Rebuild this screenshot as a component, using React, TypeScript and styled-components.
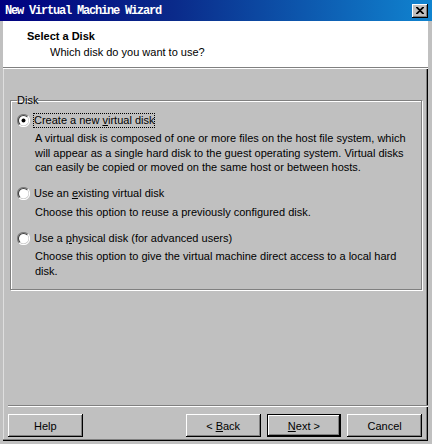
import React from "react";
import styled, { createGlobalStyle } from "styled-components";

const Global = createGlobalStyle`
  html, body { margin: 0; padding: 0; background: #c0c0c0; }
  body { font-family: Tahoma, "Liberation Sans", Arial, sans-serif; font-size: 11px; color: #000; }
`;

const Window = styled.div`
  width: 432px;
  height: 444px;
  box-sizing: border-box;
  background: #c0c0c0;
  border-left: 3px solid #c0c0c0;
  border-right: 4px solid #c0c0c0;
  border-bottom: 3px solid #c0c0c0;
  box-shadow: inset -1px -1px 0 #000, inset -2px -2px 0 #808080, inset 1px 0 0 #dfdfdf;
  display: flex;
  flex-direction: column;
  position: relative;
`;

const TitleBar = styled.div`
  height: 21px;
  margin-left: -3px;
  margin-right: -4px;
  padding: 0 3px 0 5px;
  background: linear-gradient(to right, #000080 0%, #0a2a8a 40%, #1084d0 100%);
  display: flex;
  align-items: center;
  justify-content: space-between;
`;

const TitleText = styled.span`
  font-family: "Liberation Mono", "DejaVu Sans Mono", monospace;
  font-weight: bold;
  font-size: 12px;
  letter-spacing: -1.2px;
  color: #fff;
`;

const CloseButton = styled.div`
  width: 16px;
  height: 14px;
  box-sizing: border-box;
  background: #c0c0c0;
  box-shadow: inset -1px -1px 0 #000, inset 1px 1px 0 #fff, inset -2px -2px 0 #808080;
  display: flex;
  align-items: center;
  justify-content: center;
  margin-right: 1px;
`;

const Header = styled.div`
  height: 47px;
  background: #fff;
  padding: 8px 0 0 24px;
  box-sizing: border-box;
  border-bottom: 1px solid #808080;
  box-shadow: 0 1px 0 #fff;
`;

const HeaderTitle = styled.div`
  font-weight: bold;
  font-size: 11px;
  line-height: 14px;
`;

const HeaderSub = styled.div`
  padding-left: 23px;
  line-height: 14px;
  margin-top: 2px;
`;

const Body = styled.div`
  flex: 1;
  display: flex;
  flex-direction: column;
  padding: 26px 6px 0 7px;
`;

const GroupBox = styled.fieldset`
  margin: 0;
  padding: 6px 0 0 6px;
  height: 196px;
  box-sizing: border-box;
  border: 1px solid #808080;
  box-shadow: inset 1px 1px 0 #fff, 1px 1px 0 #fff;
`;

const Legend = styled.legend`
  padding: 0;
  margin-left: 0;
  line-height: 12px;
`;

const Option = styled.div<{ gap: number }>`
  display: flex;
  flex-direction: column;
  margin-bottom: ${(p) => p.gap}px;
`;

const OptionRow = styled.div`
  display: flex;
  align-items: center;
  gap: 3px;
  height: 16px;
`;

const OptionLabel = styled.span<{ focused?: boolean }>`
  padding: 1px 1px;
  outline: ${(p) => (p.focused ? "1px dotted #000" : "none")};
  outline-offset: -1px;
  line-height: 13px;
`;

const Desc = styled.div`
  margin-top: 3px;
  padding-left: 18px;
  padding-right: 12px;
  line-height: 14.5px;
`;

const Spacer = styled.div`
  flex: 1;
`;

const Separator = styled.div`
  margin: 0 -6px 7px -2px;
  border-top: 1px solid #808080;
  border-bottom: 1px solid #fff;
`;

const ButtonBar = styled.div`
  display: flex;
  align-items: center;
  height: 23px;
  margin-bottom: 4px;
  margin-left: -2px;
`;

const Button = styled.div<{ isDefault?: boolean; gapLeft?: number }>`
  width: 75px;
  height: 23px;
  box-sizing: border-box;
  margin-left: ${(p) => p.gapLeft ?? 0}px;
  background: #c0c0c0;
  display: flex;
  align-items: center;
  justify-content: center;
  box-shadow: ${(p) =>
    p.isDefault
      ? "inset 0 0 0 1px #000, inset -2px -2px 0 #000, inset 2px 2px 0 #fff, inset -3px -3px 0 #808080"
      : "inset -1px -1px 0 #000, inset 1px 1px 0 #fff, inset -2px -2px 0 #808080"};
`;

const U = styled.span`
  text-decoration: underline;
`;

const Radio: React.FC<{ checked?: boolean }> = ({ checked }) => (
  <svg width="13" height="13" viewBox="0 0 12 12" style={{ flexShrink: 0 }}>
    <path d="M2 10 A5.5 5.5 0 0 1 10 2" stroke="#808080" strokeWidth="1" fill="none" />
    <path d="M10 2 A5.5 5.5 0 0 1 2 10" stroke="#fff" strokeWidth="1" fill="none" />
    <circle cx="6" cy="6" r="4.6" fill="#fff" />
    <path d="M2.7 9.3 A4.6 4.6 0 0 1 9.3 2.7" stroke="#404040" strokeWidth="1" fill="none" />
    {checked && <circle cx="6" cy="6" r="1.8" fill="#000" />}
  </svg>
);

export default function App() {
  return (
    <>
      <Global />
      <Window>
        <TitleBar>
          <TitleText>New Virtual Machine Wizard</TitleText>
          <CloseButton>
            <svg width="8" height="7" viewBox="0 0 8 7">
              <path d="M0 0 L7 7 M1 0 L8 7 M7 0 L0 7 M8 0 L1 7" stroke="#000" strokeWidth="1.1" />
            </svg>
          </CloseButton>
        </TitleBar>
        <Header>
          <HeaderTitle>Select a Disk</HeaderTitle>
          <HeaderSub>Which disk do you want to use?</HeaderSub>
        </Header>
        <Body>
          <GroupBox>
            <Legend>Disk</Legend>
            <Option gap={11}>
              <OptionRow>
                <Radio checked />
                <OptionLabel focused>
                  Create a new <U>v</U>irtual disk
                </OptionLabel>
              </OptionRow>
              <Desc>
                A virtual disk is composed of one or more files on the host file system, which will
                appear as a single hard disk to the guest operating system. Virtual disks can easily
                be copied or moved on the same host or between hosts.
              </Desc>
            </Option>
            <Option gap={11}>
              <OptionRow>
                <Radio />
                <OptionLabel>
                  Use an <U>e</U>xisting virtual disk
                </OptionLabel>
              </OptionRow>
              <Desc>Choose this option to reuse a previously configured disk.</Desc>
            </Option>
            <Option gap={0}>
              <OptionRow>
                <Radio />
                <OptionLabel>
                  Use a <U>p</U>hysical disk (for advanced users)
                </OptionLabel>
              </OptionRow>
              <Desc>
                Choose this option to give the virtual machine direct access to a local hard disk.
              </Desc>
            </Option>
          </GroupBox>
          <Spacer />
          <Separator />
          <ButtonBar>
            <Button>Help</Button>
            <Button gapLeft={103}>
              &lt;&nbsp;<U>B</U>ack
            </Button>
            <Button gapLeft={6} isDefault>
              <U>N</U>ext &gt;
            </Button>
            <Button gapLeft={6}>Cancel</Button>
          </ButtonBar>
        </Body>
      </Window>
    </>
  );
}
